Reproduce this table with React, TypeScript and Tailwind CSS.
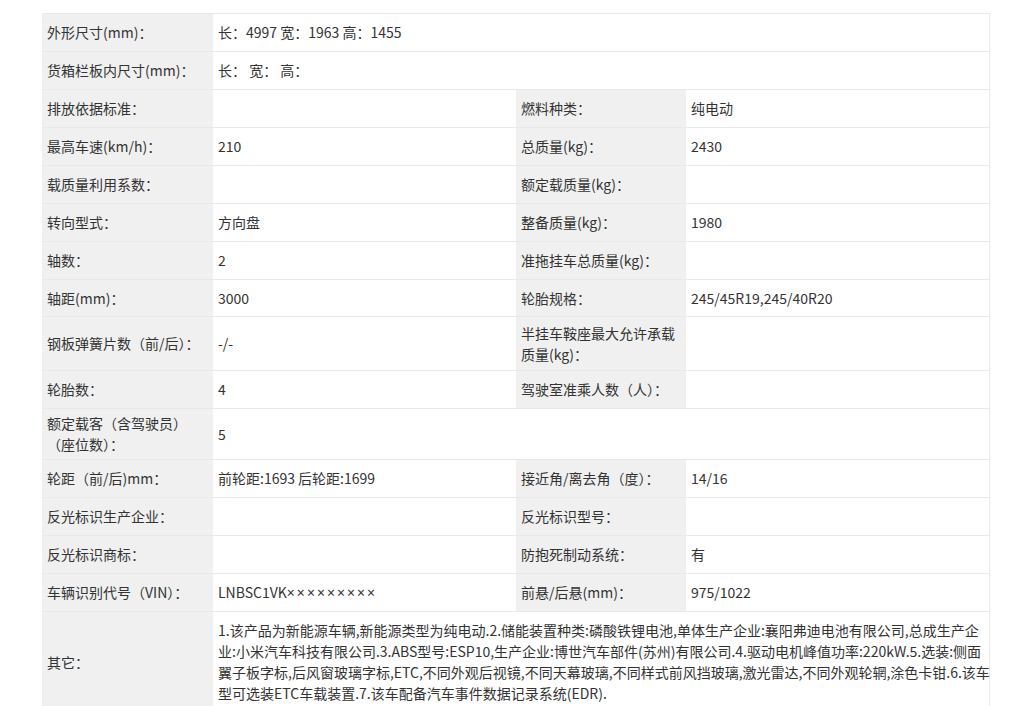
import React from 'react';

type Row = {
  label: React.ReactNode;
  value: React.ReactNode;
  label2?: string;
  value2?: string;
  h?: string;
};

const rows: Row[] = [
  { label: '外形尺寸(mm)：', value: '长：4997 宽：1963 高：1455' },
  { label: '货箱栏板内尺寸(mm)：', value: '长： 宽： 高：' },
  { label: '排放依据标准：', value: '', label2: '燃料种类：', value2: '纯电动' },
  { label: '最高车速(km/h)：', value: '210', label2: '总质量(kg)：', value2: '2430' },
  { label: '载质量利用系数：', value: '', label2: '额定载质量(kg)：', value2: '' },
  { label: '转向型式：', value: '方向盘', label2: '整备质量(kg)：', value2: '1980' },
  { label: '轴数：', value: '2', label2: '准拖挂车总质量(kg)：', value2: '' },
  { label: '轴距(mm)：', value: '3000', label2: '轮胎规格：', value2: '245/45R19,245/40R20', h: 'h-[37px]' },
  { label: '钢板弹簧片数（前/后）：', value: '-/-', label2: '半挂车鞍座最大允许承载质量(kg)：', value2: '', h: 'h-[54px]' },
  { label: '轮胎数：', value: '4', label2: '驾驶室准乘人数（人）：', value2: '' },
  {
    label: (
      <>
        额定载客（含驾驶员）
        <br />
        （座位数）：
      </>
    ),
    value: '5',
    h: 'h-[51px]',
  },
  { label: '轮距（前/后)mm：', value: '前轮距:1693 后轮距:1699', label2: '接近角/离去角（度）：', value2: '14/16' },
  { label: '反光标识生产企业：', value: '', label2: '反光标识型号：', value2: '' },
  { label: '反光标识商标：', value: '', label2: '防抱死制动系统：', value2: '有' },
  {
    label: '车辆识别代号（VIN）：',
    value: (
      <>
        LNBSC1VK
        <span className="tracking-[2px]" style={{ fontFamily: '"Noto Sans", sans-serif' }}>
          ×××××××××
        </span>
      </>
    ),
    label2: '前悬/后悬(mm)：',
    value2: '975/1022',
  },
];

// line breaks kept as in the source page
const otherLines = [
  '1.该产品为新能源车辆,新能源类型为纯电动.2.储能装置种类:磷酸铁锂电池,单体生产企业:襄阳弗迪电池有限公司,总成生产企',
  '业:小米汽车科技有限公司.3.ABS型号:ESP10,生产企业:博世汽车部件(苏州)有限公司.4.驱动电机峰值功率:220kW.5.选装:侧面',
  '翼子板字标,后风窗玻璃字标,ETC,不同外观后视镜,不同天幕玻璃,不同样式前风挡玻璃,激光雷达,不同外观轮辋,涂色卡钳.6.该车',
  '型可选装ETC车载装置.7.该车配备汽车事件数据记录系统(EDR).',
];

const labelCls = 'bg-[#f0f0f0] px-[5px] py-[3px] align-middle leading-[21px] border-b border-[#e9e9e9]';
const valueCls = 'bg-white px-[5px] py-[3px] align-middle leading-[21px] border-b border-[#e9e9e9]';

export default function App() {
  return (
    <div
      className="min-h-screen bg-white pl-[42px] pt-[13px] text-[14px] text-[#333]"
      style={{ fontFamily: '"Noto Sans CJK SC", "Noto Sans", sans-serif' }}
    >
      <table className="w-[947px] table-fixed border-collapse border-t border-r border-[#e9e9e9]">
        <colgroup>
          <col className="w-[171px]" />
          <col className="w-[303px]" />
          <col className="w-[170px]" />
          <col className="w-[303px]" />
        </colgroup>
        <tbody>
          {rows.map((r, i) => (
            <tr key={i} className={r.h ?? 'h-[38px]'}>
              <td className={labelCls}>{r.label}</td>
              {r.label2 === undefined ? (
                <td colSpan={3} className={valueCls}>{r.value}</td>
              ) : (
                <>
                  <td className={valueCls}>{r.value}</td>
                  <td className={labelCls}>{r.label2}</td>
                  <td className={valueCls}>{r.value2}</td>
                </>
              )}
            </tr>
          ))}
          <tr>
            <td className={labelCls}>其它：</td>
            <td colSpan={3} className="bg-white px-[5px] pt-[8px] pb-[8px] align-middle leading-[21px] border-b border-[#e9e9e9]">
              {otherLines.map((l, i) => (
                <div key={i} className="whitespace-nowrap">
                  {l}
                </div>
              ))}
            </td>
          </tr>
        </tbody>
      </table>
    </div>
  );
}
